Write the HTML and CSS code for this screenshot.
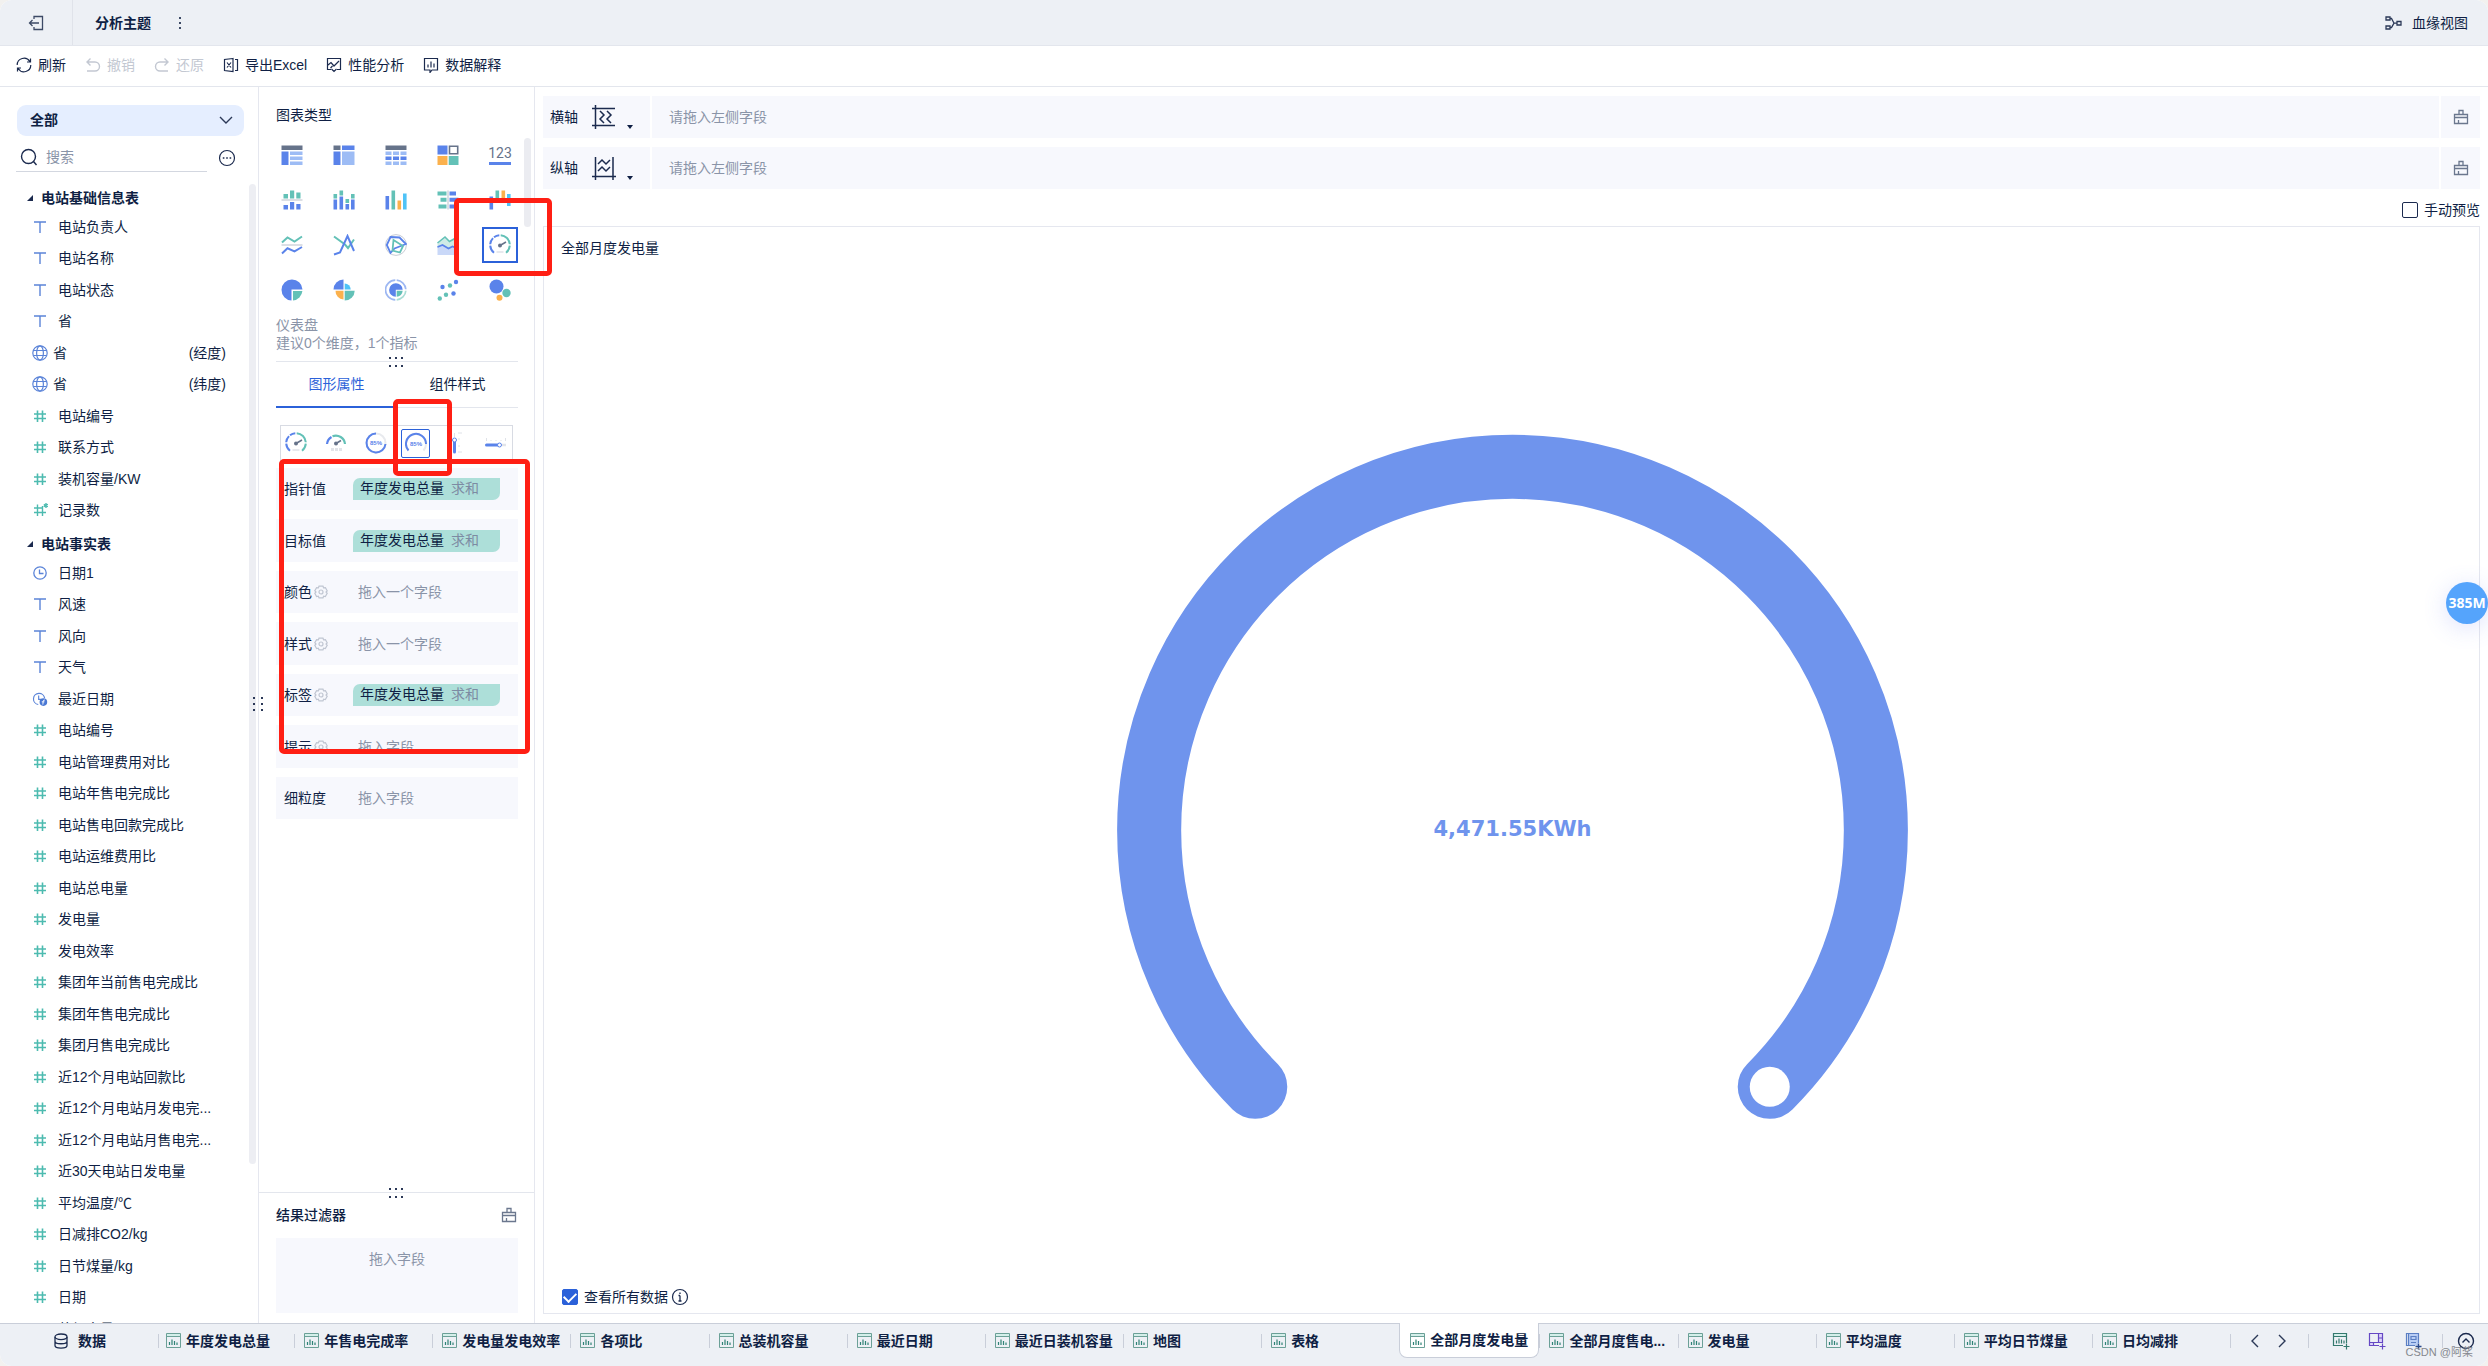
FILE: index.html
```html
<!DOCTYPE html>
<html lang="zh-CN">
<head>
<meta charset="utf-8">
<title>分析主题</title>
<link rel="stylesheet" href="styles.css">
</head>
<body>
<svg class="sprite" aria-hidden="true">
  <symbol id="i-text" viewBox="0 0 16 16"><path d="M2 3h12M8 3v11" fill="none" stroke="#5b84d8" stroke-width="1.4"/></symbol>
  <symbol id="i-num" viewBox="0 0 16 16"><path d="M2 6h12M2 10.500h12M5.500 2.500v11.500M10.500 2.500v11.500" fill="none" stroke="#4dbbb0" stroke-width="1.6"/></symbol>
  <symbol id="i-numstar" viewBox="0 0 16 16"><path d="M2 6h9M2 10.500h12M5.500 2.500v11.500M10.500 4v10M14 1v5M11.800 2.300l4.200 2.400M16 2.300l-4.200 2.400" fill="none" stroke="#4dbbb0" stroke-width="1.400"/></symbol>
  <symbol id="i-geo" viewBox="0 0 16 16"><g fill="none" stroke="#5b84d8" stroke-width="1.200"><circle cx="8" cy="8" r="7.200"/><ellipse cx="8" cy="8" rx="3.400" ry="7.200"/><path d="M1.500 5.500h13M1.500 10.500h13"/></g></symbol>
  <symbol id="i-date" viewBox="0 0 16 16"><g fill="none" stroke="#5b84d8" stroke-width="1.300"><circle cx="8" cy="8" r="6.200"/><path d="M7.500 4.500v4h4"/></g></symbol>
  <symbol id="i-datef" viewBox="0 0 18 16"><g fill="none" stroke="#5b84d8" stroke-width="1.300"><path d="M7 14.200A6.300 6.300 0 1 1 14.200 7M7.500 4v4.500h3"/></g><circle cx="12.800" cy="11.500" r="4.300" fill="#4a78d4"/><path d="M14.500 9.200q-1.700-.4-1.900 1.300l-.4 3.800M11 11.200h3" stroke="#fff" fill="none"/></symbol>
  <symbol id="i-brush" viewBox="0 0 16 16"><path d="M6 5.500V1.500h4v4M1.500 5.500h13v9h-13zM1.500 8.500h13M5.500 11v3.500" fill="none" stroke="#6b778e" stroke-width="1.300"/></symbol>
  <symbol id="i-gear" viewBox="0 0 14 14"><g fill="none" stroke="#c0c6d2" stroke-width="1.200"><path d="M5 1.200h4l.6 1.600 1.800-.2 1.800 3.200L12 7l1.200 1.400-1.900 3.100-1.700-.3L9 12.800H5l-.7-1.600-1.700.3L.8 8.400 2 7 .8 5.700l1.800-3.100 1.800.2z"/><circle cx="7" cy="7" r="2"/></g></symbol>
  <symbol id="i-sheet" viewBox="0 0 15 15"><rect x=".5" y=".5" width="14" height="3" fill="#d4efea"/><path d="M.5.5h14v14H.5zM.5 3.500h14" fill="none" stroke="#6ba097"/><path d="M3.500 12V9M6 12V6.500M8.500 12V8M11 12V9.500" stroke="#2f8376" stroke-width="1.200"/></symbol>
  <symbol id="i-gauge" viewBox="0 0 22 22"><g fill="none" stroke-width="2"><path d="M5 18.700A9.800 9.800 0 0 1 1.200 11.700M1.200 10.300A9.800 9.800 0 0 1 4 4.100M5 3.200A9.800 9.800 0 0 1 10.300 1.200" stroke="#5a83ea"/><path d="M11.700 1.200A9.800 9.800 0 0 1 20.800 10.300M20.800 11.700A9.800 9.800 0 0 1 17 18.700" stroke="#63c1b7"/></g><path d="M11 11.500l6-3.500" stroke="#66738a" stroke-width="1.500"/><circle cx="11" cy="11.500" r="2" fill="#66738a"/><path d="M7.500 18h7" stroke="#dfe2e8" stroke-width="1.500"/></symbol>
</svg>

<div class="app">
  <header class="topbar">
    <button class="topbar-exit" aria-label="退出"><svg width="16" height="16" viewBox="0 0 16 16" fill="none" stroke="#3d4a66" stroke-width="1.300"><path d="M6 4V1.500h8.500v13H6V12M11 8H1.500M4.500 5L1.500 8l3 3"/></svg></button>
    <h1 class="topbar-title">分析主题</h1>
    <button class="topbar-more" aria-label="更多"><svg width="4" height="14" viewBox="0 0 4 14" fill="#3d4a66"><path d="M1 1h2v2H1zM1 6h2v2H1zM1 11h2v2H1z"/></svg></button>
    <a class="lineage" href="#lineage"><svg width="17" height="14" viewBox="0 0 17 14" fill="none" stroke="#2b3857" stroke-width="1.300"><path d="M1 1h4v3H1zM1 10h4v3H1zM12 5.500h4v3.500h-4zM5 2.500h1.500L9 7.200h3M5 11.500h1.500L9 7.200"/></svg>血缘视图</a>
  </header>

  <nav class="toolbar">
    <button class="tool"><svg width="16" height="16" viewBox="0 0 16 16" fill="none" stroke="#1b2a4e" stroke-width="1.200"><path d="M1.200 8A6.800 6.800 0 0 1 13.800 4.500M14.500 1.500v3.500H11M14.800 8A6.800 6.800 0 0 1 2.200 11.500M1.500 14.500V11H5"/></svg>刷新</button>
    <button class="tool" disabled><svg width="16" height="16" viewBox="0 0 16 16" fill="none" stroke="#c3c8d2" stroke-width="1.400"><path d="M5.500 1.500L2 5l3.500 3.500M2 5h8a4.500 4.500 0 0 1 0 9H2"/></svg>撤销</button>
    <button class="tool" disabled><svg width="16" height="16" viewBox="0 0 16 16" fill="none" stroke="#c3c8d2" stroke-width="1.400"><path d="M10.500 1.500L14 5l-3.500 3.500M14 5H6a4.500 4.500 0 0 0 0 9h8"/></svg>还原</button>
    <button class="tool"><svg width="16" height="16" viewBox="0 0 16 16" fill="none" stroke="#1b2a4e" stroke-width="1.200"><path d="M10 1.500L1.500 2.500v11L10 14.500zM12 2.500h2.500v11H12M4 5.500l4 5M8 5.500l-4 5"/></svg>导出Excel</button>
    <button class="tool"><svg width="16" height="16" viewBox="0 0 16 16" fill="none" stroke="#1b2a4e" stroke-width="1.200"><path d="M5 12.500H1.500v-11h13v11H11M2 8l3-2.500 3 3.500 5-5M5.500 12l2.500 2.500L10.500 12M4.500 11l2-2"/></svg>性能分析</button>
    <button class="tool"><svg width="16" height="16" viewBox="0 0 16 16" fill="none" stroke="#1b2a4e" stroke-width="1.200"><path d="M5 13H1.500V1.500h13V13H9l-2 2.500V13zM5 10.500V7.500M8 10.500v-6M11 10.500V6.500"/></svg>数据解释</button>
  </nav>

  <main class="workspace">
    <aside class="fields">
      <label class="scope"><select aria-label="范围"><option>全部</option></select><svg width="14" height="8" viewBox="0 0 14 8" fill="none" stroke="#2b3857" stroke-width="1.400"><path d="M1 1l6 6 6-6"/></svg></label>
      <div class="search">
        <label class="search-box"><svg width="18" height="18" viewBox="0 0 18 18" fill="none" stroke="#1b2a4e" stroke-width="1.400"><circle cx="8.500" cy="8.500" r="7"/><path d="M13.500 13.500l3 3.500"/></svg><input type="text" placeholder="搜索" aria-label="搜索"></label>
        <button class="search-more" aria-label="更多"><svg width="18" height="18" viewBox="0 0 18 18"><circle cx="9" cy="9" r="7.500" fill="none" stroke="#1b2a4e" stroke-width="1.200"/><path d="M4.800 8.200h1.600v1.600H4.800zM8.200 8.200h1.600v1.600H8.200zM11.600 8.200h1.600v1.600h-1.600z" fill="#1b2a4e"/></svg></button>
      </div>
      <div class="tree">
        <h2 class="tree-group">电站基础信息表</h2>
        <ul class="tree-list">
          <li><svg><use href="#i-text"/></svg>电站负责人</li>
          <li><svg><use href="#i-text"/></svg>电站名称</li>
          <li><svg><use href="#i-text"/></svg>电站状态</li>
          <li><svg><use href="#i-text"/></svg>省</li>
          <li class="geo"><svg><use href="#i-geo"/></svg>省<span>(经度)</span></li>
          <li class="geo"><svg><use href="#i-geo"/></svg>省<span>(纬度)</span></li>
          <li><svg><use href="#i-num"/></svg>电站编号</li>
          <li><svg><use href="#i-num"/></svg>联系方式</li>
          <li><svg><use href="#i-num"/></svg>装机容量/KW</li>
          <li><svg><use href="#i-numstar"/></svg>记录数</li>
        </ul>
        <h2 class="tree-group">电站事实表</h2>
        <ul class="tree-list">
          <li><svg><use href="#i-date"/></svg>日期1</li>
          <li><svg><use href="#i-text"/></svg>风速</li>
          <li><svg><use href="#i-text"/></svg>风向</li>
          <li><svg><use href="#i-text"/></svg>天气</li>
          <li><svg><use href="#i-datef"/></svg>最近日期</li>
          <li><svg><use href="#i-num"/></svg>电站编号</li>
          <li><svg><use href="#i-num"/></svg>电站管理费用对比</li>
          <li><svg><use href="#i-num"/></svg>电站年售电完成比</li>
          <li><svg><use href="#i-num"/></svg>电站售电回款完成比</li>
          <li><svg><use href="#i-num"/></svg>电站运维费用比</li>
          <li><svg><use href="#i-num"/></svg>电站总电量</li>
          <li><svg><use href="#i-num"/></svg>发电量</li>
          <li><svg><use href="#i-num"/></svg>发电效率</li>
          <li><svg><use href="#i-num"/></svg>集团年当前售电完成比</li>
          <li><svg><use href="#i-num"/></svg>集团年售电完成比</li>
          <li><svg><use href="#i-num"/></svg>集团月售电完成比</li>
          <li><svg><use href="#i-num"/></svg>近12个月电站回款比</li>
          <li><svg><use href="#i-num"/></svg>近12个月电站月发电完...</li>
          <li><svg><use href="#i-num"/></svg>近12个月电站月售电完...</li>
          <li><svg><use href="#i-num"/></svg>近30天电站日发电量</li>
          <li><svg><use href="#i-num"/></svg>平均温度/℃</li>
          <li><svg><use href="#i-num"/></svg>日减排CO2/kg</li>
          <li><svg><use href="#i-num"/></svg>日节煤量/kg</li>
          <li><svg><use href="#i-num"/></svg>日期</li>
          <li><svg><use href="#i-num"/></svg>装机容量</li>
        </ul>
        <div class="tree-scroll"></div>
      </div>
      <div class="grip grip-side"></div>
    </aside>

    <section class="config">
      <div class="types">
        <h2 class="config-title">图表类型</h2>
        <div class="type-grid">
          <button aria-label="分组表"><svg viewBox="0 0 22 22"><path d="M.5 1.500h21V6H.5z" fill="#66738a"/><path d="M.5 7.500h7V21h-7z" fill="#5a83ea"/><path d="M9 7.500h12.500v3.500H9zM9 12.500h12.500V16H9zM9 17.500h12.500V21H9z" fill="#9dbcf5"/></svg></button>
          <button aria-label="交叉表"><svg viewBox="0 0 22 22"><path d="M.5 1.500h7V6h-7z" fill="#66738a"/><path d="M.5 7.500h7V21h-7zM9 1.500h12.500V6H9z" fill="#5a83ea"/><path d="M9 7.500h12.500V21H9z" fill="#9dbcf5"/></svg></button>
          <button aria-label="明细表"><svg viewBox="0 0 22 22"><path d="M.5 1.500h21V6H.5z" fill="#66738a"/><path d="M.5 7.500h6v3.500h-6zM8 7.500h6v3.500H8zM15.500 7.500h6v3.500h-6zM.5 17.500h6V21h-6zM8 17.500h6V21H8zM15.500 17.500h6V21h-6z" fill="#9dbcf5"/><path d="M.5 12.500h6V16h-6zM8 12.500h6V16H8zM15.500 12.500h6V16h-6z" fill="#5a83ea"/></svg></button>
          <button aria-label="颜色表格"><svg viewBox="0 0 22 22"><path d="M.5 1.500h10v9H.5z" fill="#5a83ea"/><path d="M12.500 2.300h8.200v7.400h-8.200z" fill="none" stroke="#66738a" stroke-width="1.600"/><path d="M.5 12h10v9H.5z" fill="#fbb14d"/><path d="M11.700 12h9.800v9h-9.800z" fill="#63c1b7"/></svg></button>
          <button aria-label="指标卡" class="kpi"><span>123</span></button>

          <button aria-label="对比柱形图"><svg viewBox="0 0 22 22"><path d="M2.500 5h4.500v4.500H2.500zM9 1.500h4.200v8H9zM15.300 3.500h4.200v6h-4.200z" fill="#63c1b7"/><path d="M.5 11h21" stroke="#b9bfca"/><path d="M2.500 16h4.500v4.500H2.500zM9 13h4.200v7.500H9zM15.300 15h4.200v5.500h-4.200z" fill="#5a83ea"/></svg></button>
          <button aria-label="堆积柱形图"><svg viewBox="0 0 22 22"><path d="M.5 5h3.600v4.500H.5zM6.500 1.500h3.600v5H6.500zM12.500 10h3.600v4h-3.600zM18 5h3.600v4.500H18z" fill="#63c1b7"/><path d="M.5 10.500h3.600v10H.5zM6.500 7.500h3.600v13H6.500zM12.500 15h3.600v5.500h-3.600zM18 10.500h3.600v10H18z" fill="#5a83ea"/></svg></button>
          <button aria-label="分组柱形图"><svg viewBox="0 0 22 22"><path d="M.5 7h3.600v13.500H.5z" fill="#5a83ea"/><path d="M6.500 1.500h3.600v19H6.500z" fill="#63c1b7"/><path d="M12.500 11.500h3.600v9h-3.600z" fill="#fbb14d"/><path d="M18 4.500h3.600v16H18z" fill="#4fc3f7"/></svg></button>
          <button aria-label="对比条形图"><svg viewBox="0 0 22 22"><path d="M.5 2.500h9v4h-9zM3.500 8.800h6v4h-6zM1.500 15.500h8v4h-8z" fill="#63c1b7"/><path d="M11 1.500v19" stroke="#b9bfca"/><path d="M12.500 2.500h6.500v4h-6.500zM12.500 8.800h9v4h-9zM12.500 15.500h7v4h-7z" fill="#5a83ea"/></svg></button>
          <button aria-label="瀑布图"><svg viewBox="0 0 22 22"><path d="M.5 7.500h3.600v13H.5z" fill="#5a83ea"/><path d="M6.500 1.500h3.600v9H6.500z" fill="#63c1b7"/><path d="M12.500 1.500h3.600v8h-3.600z" fill="#fbb14d"/><path d="M18 5h3.600v12H18z" fill="#4fc3f7"/></svg></button>

          <button aria-label="折线图"><svg viewBox="0 0 22 22" fill="none" stroke-width="2"><path d="M1 8.500l5.500-5 7 4L21 2.500" stroke="#63c1b7"/><path d="M.5 11h21" stroke="#b9bfca" stroke-width="1"/><path d="M1 19.500l5.500-5.200 7 3L21 13" stroke="#5a83ea"/></svg></button>
          <button aria-label="组合折线图"><svg viewBox="0 0 22 22" fill="none" stroke-width="2"><path d="M1 2.500l11 8 3 3.500L21 5.500" stroke="#63c1b7"/><path d="M1 20.500l6-2L14.500 2 21 17" stroke="#5a83ea"/></svg></button>
          <button aria-label="雷达图"><svg viewBox="0 0 22 22" fill="none" stroke-width="1.800"><circle cx="11" cy="11" r="10.400" stroke="#c8ccd5" stroke-width="1"/><path d="M5.500 3l9 .5 6.500 6.500-11.500 4.500-4 4.500L1.800 11z" stroke="#5a83ea"/><path d="M8.500 6l9.500 6-3 6.500-7.500-2z" stroke="#63c1b7"/></svg></button>
          <button aria-label="面积图"><svg viewBox="0 0 22 22"><path d="M.5 9L8 3l4.500 4.500L17 5l4.500 3v6H.5z" fill="#cfebe6"/><path d="M.5 13l5-2 6 3.500 4-2 6 2.500v6H.5z" fill="#c9d8f8"/><path d="M.5 9L8 3l4.500 4.500L17 5l4.500 3" fill="none" stroke="#63c1b7" stroke-width="1.600"/><path d="M.5 13l5-2 6 3.500 4-2 6 2.500" fill="none" stroke="#5a83ea" stroke-width="1.600"/></svg></button>
          <button aria-label="仪表盘" class="is-selected"><svg><use href="#i-gauge"/></svg></button>

          <button aria-label="饼图"><svg viewBox="0 0 22 22"><path d="M10.500 10.500H21.500A10.500 10.500 0 1 0 10.500 21.500z" fill="#5a83ea"/><path d="M12 12h9.400A10.500 10.500 0 0 1 12 21.400z" fill="#63c1b7"/></svg></button>
          <button aria-label="玫瑰图"><svg viewBox="0 0 22 22"><path d="M10.500 10.500V.5A10 10 0 0 0 .5 10.500z" fill="#5a83ea"/><path d="M11.700 10.500V4.500a6 6 0 0 1 6 6z" fill="#4fc3f7"/><path d="M10.500 11.700V20.500A8.500 8.500 0 0 1 2.500 11.700z" fill="#fbb14d"/><path d="M11.700 11.700h10A10 10 0 0 1 11.700 21.500z" fill="#63c1b7"/></svg></button>
          <button aria-label="多层饼图"><svg viewBox="0 0 22 22"><g fill="none" stroke-width="1.700"><path d="M10.300 1.200A9.800 9.800 0 0 0 10.300 20.800M11.700 1.200A9.800 9.800 0 0 1 20.800 10.300" stroke="#9db7f2"/><path d="M20.800 11.700A9.800 9.800 0 0 1 11.700 20.800" stroke="#a9ddd5"/></g><path d="M10.800 10.800H17.700A6.800 6.800 0 1 0 10.800 17.800z" fill="#5a83ea"/><path d="M11.700 11.700h6A6.500 6.500 0 0 1 11.700 17.800z" fill="#63c1b7"/></svg></button>
          <button aria-label="散点图"><svg viewBox="0 0 22 22"><g fill="#5a83ea"><circle cx="19" cy="3" r="2.200"/><circle cx="5.500" cy="8" r="2.200"/><circle cx="16.500" cy="14.500" r="2.200"/></g><g fill="#63c1b7"><circle cx="13" cy="6.500" r="2.200"/><circle cx="9" cy="15.800" r="2.200"/><circle cx="2.800" cy="19.500" r="2.200"/></g></svg></button>
          <button aria-label="气泡图"><svg viewBox="0 0 22 22"><circle cx="7.500" cy="7.500" r="7" fill="#5a83ea"/><circle cx="17.500" cy="14" r="4.200" fill="#63c1b7"/><circle cx="10.500" cy="18.800" r="3" fill="#fbb14d"/></svg></button>
        </div>
        <div class="type-scroll"></div>
        <p class="type-hint">仪表盘<br>建议0个维度，1个指标</p>
        <div class="grip grip-row"></div>
      </div>

      <div class="attr-tabs" role="tablist">
        <button role="tab" class="is-active">图形属性</button>
        <button role="tab">组件样式</button>
      </div>

      <div class="gauge-styles">
        <button aria-label="多指针仪表盘"><svg><use href="#i-gauge"/></svg></button>
        <button aria-label="半圆指针仪表盘"><svg viewBox="0 0 22 22"><g fill="none" stroke-width="2.200"><path d="M2 12a9.200 9.200 0 0 1 4.500-7" stroke="#5a83ea"/><path d="M7.500 4.200A9.200 9.200 0 0 1 20 12" stroke="#63c1b7"/></g><path d="M11 11.500l5-3" stroke="#66738a" stroke-width="1.500"/><circle cx="11" cy="11.500" r="2" fill="#66738a"/><path d="M6 16h3v3H6zM10 16h3v3h-3zM14 16h3v3h-3z" fill="#e2e4e9"/></svg></button>
        <button aria-label="百分比圆环"><svg viewBox="0 0 22 22"><circle cx="11" cy="11" r="9.500" fill="none" stroke="#e8eaee" stroke-width="2"/><path d="M11 1.500A9.500 9.500 0 1 0 20.500 12" fill="none" stroke="#5a83ea" stroke-width="2"/><text x="11" y="13" class="pct">85%</text></svg></button>
        <button aria-label="百分比刻度槽" class="is-selected"><svg viewBox="0 0 22 22"><path d="M3.500 18.500A10 10 0 1 1 18.500 18.500" fill="none" stroke="#e8eaee" stroke-width="2"/><path d="M3.500 18.500A10 10 0 1 1 21 12" fill="none" stroke="#5a83ea" stroke-width="2"/><text x="11" y="14" class="pct">85%</text></svg></button>
        <button aria-label="垂直试管"><svg viewBox="0 0 22 22"><path d="M9.500 10v10" stroke="#5a83ea" stroke-width="3" stroke-linecap="round"/><circle cx="9.500" cy="8" r="2" fill="#fff" stroke="#5a83ea"/><path d="M9.500 1v4M13 1h4M13 7h2M13 14h2M13 20h4" stroke="#dfe2e8"/></svg></button>
        <button aria-label="水平试管"><svg viewBox="0 0 22 22"><path d="M17 13h4" stroke="#e2e4e9" stroke-width="2.500"/><path d="M1.500 13h11" stroke="#5a83ea" stroke-width="3" stroke-linecap="round"/><circle cx="14.500" cy="13" r="2" fill="#fff" stroke="#5a83ea"/><path d="M1.500 6v3M6 8v1M11 8v1M16 8v1M20.500 6v3" stroke="#dfe2e8"/></svg></button>
      </div>

      <dl class="slots">
        <div><dt>指针值</dt><dd class="chip">年度发电总量<span>求和</span></dd></div>
        <div><dt>目标值</dt><dd class="chip">年度发电总量<span>求和</span></dd></div>
        <div><dt>颜色<svg><use href="#i-gear"/></svg></dt><dd>拖入一个字段</dd></div>
        <div><dt>样式<svg><use href="#i-gear"/></svg></dt><dd>拖入一个字段</dd></div>
        <div><dt>标签<svg><use href="#i-gear"/></svg></dt><dd class="chip">年度发电总量<span>求和</span></dd></div>
        <div><dt>提示<svg><use href="#i-gear"/></svg></dt><dd>拖入字段</dd></div>
        <div><dt>细粒度</dt><dd>拖入字段</dd></div>
      </dl>

      <div class="filter">
        <div class="grip grip-row"></div>
        <div class="filter-head"><h2>结果过滤器</h2><button aria-label="清空"><svg><use href="#i-brush"/></svg></button></div>
        <div class="filter-drop">拖入字段</div>
      </div>

      <div class="mark mark-type"></div>
      <div class="mark mark-style"></div>
      <div class="mark mark-slots"></div>
    </section>

    <section class="stage">
      <div class="axis">
        <div class="axis-name">横轴<button aria-label="横轴设置"><svg width="24" height="24" viewBox="0 0 24 24" fill="none" stroke="#1b2a4e" stroke-width="1.500"><path d="M3.500 0v24M0 3.500h23M0 20.500h23M8 6l4 4-4 4 4 4M15 6l4 4-4 4 4 4"/></svg><i></i></button></div>
        <div class="axis-drop">请拖入左侧字段</div>
        <button class="axis-clear" aria-label="清空"><svg><use href="#i-brush"/></svg></button>
      </div>
      <div class="axis">
        <div class="axis-name">纵轴<button aria-label="纵轴设置"><svg width="24" height="24" viewBox="0 0 24 24" fill="none" stroke="#1b2a4e" stroke-width="1.500"><path d="M3.500 1v23M21 1v23M0 20.500h24M6 8l4-4 4 4 4-4M6 15l4-4 4 4 4-4"/></svg><i></i></button></div>
        <div class="axis-drop">请拖入左侧字段</div>
        <button class="axis-clear" aria-label="清空"><svg><use href="#i-brush"/></svg></button>
      </div>
      <div class="preview"><label class="check"><input type="checkbox">手动预览</label></div>
      <div class="canvas">
        <h2 class="canvas-title">全部月度发电量</h2>
        <svg class="gauge" viewBox="-506 -560 1010 1011">
          <path d="M-257 257A363 363 0 1 1 257 257" fill="none" stroke="#6f94ed" stroke-width="64" stroke-linecap="round"/>
          <circle cx="257" cy="257" r="20" fill="#fff"/>
          <text x="0" y="6" class="gauge-value">4,471.55KWh</text>
        </svg>
        <div class="canvas-foot"><label class="check"><input type="checkbox" checked>查看所有数据</label><svg width="18" height="18" viewBox="0 0 18 18"><circle cx="9" cy="9" r="7.500" fill="none" stroke="#1b2a4e" stroke-width="1.200"/><path d="M9 7.500v5.500M9 4.500v1.500M7.500 7.500H9M7.500 13h3" stroke="#1b2a4e" stroke-width="1.300"/></svg></div>
      </div>
    </section>
  </main>

  <footer class="sheets">
    <button class="data-tab"><svg width="14" height="16" viewBox="0 0 14 16" fill="none" stroke="#1b2a4e" stroke-width="1.300"><ellipse cx="7" cy="3.800" rx="6" ry="2.800"/><path d="M1 4v8.500c0 3.500 12 3.500 12 0V4M1 8.200c0 3.400 12 3.400 12 0"/></svg>数据</button>
    <div class="sheet-list">
      <button><svg><use href="#i-sheet"/></svg>年度发电总量</button>
      <button><svg><use href="#i-sheet"/></svg>年售电完成率</button>
      <button><svg><use href="#i-sheet"/></svg>发电量发电效率</button>
      <button><svg><use href="#i-sheet"/></svg>各项比</button>
      <button><svg><use href="#i-sheet"/></svg>总装机容量</button>
      <button><svg><use href="#i-sheet"/></svg>最近日期</button>
      <button><svg><use href="#i-sheet"/></svg>最近日装机容量</button>
      <button><svg><use href="#i-sheet"/></svg>地图</button>
      <button><svg><use href="#i-sheet"/></svg>表格</button>
      <button class="is-active"><svg><use href="#i-sheet"/></svg>全部月度发电量</button>
      <button><svg><use href="#i-sheet"/></svg>全部月度售电...</button>
      <button><svg><use href="#i-sheet"/></svg>发电量</button>
      <button><svg><use href="#i-sheet"/></svg>平均温度</button>
      <button><svg><use href="#i-sheet"/></svg>平均日节煤量</button>
      <button><svg><use href="#i-sheet"/></svg>日均减排</button>
    </div>
    <div class="pager">
      <button aria-label="上一页"><svg width="8" height="14" viewBox="0 0 8 14"><path d="M7 1L1 7l6 6" fill="none" stroke="#2b3857" stroke-width="1.400"/></svg></button>
      <button aria-label="下一页"><svg width="8" height="14" viewBox="0 0 8 14"><path d="M1 1l6 6-6 6" fill="none" stroke="#2b3857" stroke-width="1.400"/></svg></button>
    </div>
    <div class="adders">
      <button aria-label="新建组件"><svg width="18" height="18" viewBox="0 0 18 18"><path d="M1.500 1.500h13V5h-13z" fill="#d4efea"/><path d="M11 13.500H1.500v-12h13V11M1.500 4.500h13M4.500 11.500v-3M7 11.500v-5M9.500 11.500v-4M12 11.500v-3M14.500 11.500v6M11.500 14.500h6" fill="none" stroke="#34796e" stroke-width="1.200"/></svg></button>
      <button aria-label="新建仪表板"><svg width="18" height="18" viewBox="0 0 18 18"><path d="M10.500 1.500h4v9h-9v3h-4v-3h9z" fill="#ddd3fb"/><path d="M11 13.500H1.500v-12h13V11M10.500 1.500v9M1.500 10.500h13M5.500 10.500v3M10.500 6h4M14.500 11.500v6M11.500 14.500h6" fill="none" stroke="#6548c4" stroke-width="1.200"/></svg></button>
      <button aria-label="新建文档"><svg width="18" height="18" viewBox="0 0 18 18"><path d="M4.500 1.500h10v12h-10z" fill="#b8cdf5"/><path d="M11 13.500H2.500v-12h12V11M4.500 1.500v12M7 4.500h5v3H7zM7 10.500h5" fill="none" stroke="#5b7fc4" stroke-width="1.200"/><path d="M14.500 11.500v6M11.500 14.500h6" stroke="#2b4a8c" stroke-width="1.400"/></svg></button>
    </div>
    <button class="collapse" aria-label="收起"><svg width="18" height="18" viewBox="0 0 18 18" fill="none" stroke="#1b2a4e" stroke-width="1.400"><circle cx="9" cy="9" r="7.500"/><path d="M5.500 10.500L9 7l3.500 3.500"/></svg></button>
  </footer>

  <button class="memory">385M</button>
  <span class="watermark">CSDN @阿桨</span>
</div>
</body>
</html>
```

FILE: styles.css
```css
* { box-sizing: border-box; }

body {
  margin: 0;
  background: #f2f1ef;
  color: #0f1f44;
  font: 14px/20px "Liberation Sans", "Noto Sans CJK SC", sans-serif;
}

button, input, select {
  margin: 0;
  padding: 0;
  border: 0;
  background: none;
  color: inherit;
  font: inherit;
}

button { white-space: nowrap; }
h1, h2, p, ul, dl, dd { margin: 0; padding: 0; }
h1, h2 { font-size: 14px; font-weight: 400; }
svg { display: block; flex: none; }
.sprite { position: absolute; width: 0; height: 0; }

.app {
  position: relative;
  display: flex;
  flex-direction: column;
  height: 100vh;
  overflow: hidden;
  border-radius: 12px;
  background: #fff;
}

/* Top bar */
.topbar {
  display: flex;
  align-items: center;
  flex: none;
  height: 46px;
  border-bottom: 1px solid #e3e6ed;
  background: #edf0f5;
}
.topbar-exit {
  display: flex;
  align-items: center;
  justify-content: center;
  width: 73px;
  height: 100%;
  border-right: 1px solid #e0e3ea;
}
.topbar-title { margin-left: 22px; font-weight: 700; }
.topbar-more { margin-left: 27px; }
.lineage {
  display: flex;
  align-items: center;
  gap: 10px;
  margin-left: auto;
  padding-right: 20px;
  color: inherit;
  text-decoration: none;
}

.toolbar {
  display: flex;
  align-items: center;
  flex: none;
  gap: 19px;
  height: 41px;
  padding: 0 16px 2px;
  border-bottom: 1px solid #e3e6ed;
}
.tool { display: flex; align-items: center; gap: 6px; }
.tool:disabled { color: #c3c8d2; }

.workspace {
  display: grid;
  grid-template-columns: 259px 276px 1fr;
  flex: 1;
  min-height: 0;
}

/* Field tree */
.fields {
  position: relative;
  display: flex;
  flex-direction: column;
  min-height: 0;
  padding-top: 18px;
  border-right: 1px solid #e5e7ef;
}
.scope {
  display: flex;
  align-items: center;
  height: 31px;
  margin: 0 14px 0 17px;
  padding: 0 11px 2px 13px;
  border-radius: 9px;
  background: #e5eeff;
}
.scope select { flex: 1; appearance: none; font-weight: 700; }
.search {
  display: flex;
  align-items: center;
  justify-content: space-between;
  height: 36px;
  margin: 0 22px 11px 16px;
}
.search-box {
  display: flex;
  align-items: center;
  gap: 8px;
  width: 191px;
  height: 36px;
  padding: 7px 0 0 4px;
  border-bottom: 1px solid #d3d7e0;
}
.search-box input { width: 140px; outline: 0; }
.search-box input::placeholder { color: #8a94a8; opacity: 1; }
.search-more { padding-top: 7px; }
.tree { position: relative; flex: 1; min-height: 0; overflow: hidden; }
.tree-group {
  display: flex;
  align-items: center;
  gap: 8px;
  height: 28px;
  padding: 2px 0 0 27px;
  font-weight: 700;
}
.tree-group::before {
  content: "";
  border-left: 6px solid transparent;
  border-bottom: 6px solid #1b2a4e;
}
.tree-list { list-style: none; }
.tree-list + .tree-group { margin-top: 3px; }
.tree-list li {
  display: flex;
  align-items: center;
  gap: 10px;
  height: 31px;
  padding: 0 32px 0 32px;
  white-space: nowrap;
}
.tree-list li:nth-child(even) { height: 32px; }
.tree-list svg { width: 16px; height: 16px; }
.tree-list .geo { gap: 5px; }
.geo span { margin-left: auto; }
.tree-scroll {
  position: absolute;
  top: 1px;
  right: 2px;
  width: 7px;
  height: 86%;
  border-radius: 4px;
  background: #edeef3;
}

/* Drag handles made of dots */
.grip {
  position: absolute;
  background-image: radial-gradient(circle at 1px 1px, #2b3857 1px, transparent 1px);
}
.grip-side { top: 610px; right: -5px; width: 10px; height: 15px; background-size: 8px 6px; }
.grip-row { left: 130px; width: 15px; height: 10px; background-size: 6px 8px; }

/* Chart configuration */
.config {
  position: relative;
  display: flex;
  flex-direction: column;
  min-height: 0;
  border-right: 1px solid #e5e7ef;
}
.types {
  position: relative;
  height: 275px;
  padding: 18px 0 0 17px;
}
.types::after {
  content: "";
  position: absolute;
  right: 16px;
  bottom: 0;
  left: 17px;
  height: 1px;
  background: #e3e6ed;
}
.type-grid {
  display: grid;
  grid-template-columns: repeat(5, 36px);
  grid-auto-rows: 36px;
  gap: 9px 16px;
  margin-top: 12px;
  margin-left: -2px;
}
.type-grid button { display: flex; align-items: center; justify-content: center; }
.type-grid svg, .gauge-styles svg { width: 22px; height: 22px; }
.type-grid .is-selected { border: 2px solid #2b61d9; background: #fff; }
.kpi span {
  display: flex;
  justify-content: center;
  width: 22px;
  border-bottom: 3px solid #5a83ea;
  color: #66738a;
  font: 14px/17px Roboto, sans-serif;
}
.type-scroll {
  position: absolute;
  top: 51px;
  right: 3px;
  width: 7px;
  height: 89px;
  border-radius: 4px;
  background: #ebecf1;
}
.type-hint { margin-top: 8px; color: #8a94a8; line-height: 18px; }
.types .grip { bottom: -5px; }

.attr-tabs {
  display: flex;
  height: 46px;
  margin: 0 16px 0 17px;
  border-bottom: 1px solid #e3e6ed;
}
.attr-tabs button { flex: 1; height: 46px; border-bottom: 2px solid transparent; }
.attr-tabs .is-active { border-color: #2b61d9; color: #2b61d9; }

.gauge-styles {
  display: flex;
  justify-content: space-between;
  align-items: center;
  height: 36px;
  margin: 17px 21px 7px;
  padding: 0 2px 0 0;
  border: 1px solid #d8dbe3;
}
.gauge-styles button {
  display: flex;
  align-items: center;
  justify-content: center;
  width: 29px;
  height: 29px;
  border: 1px solid transparent;
  border-radius: 2px;
}
.gauge-styles .is-selected { border-color: #2b61d9; }
.pct { fill: #5a83ea; font: 700 6px "Liberation Sans", sans-serif; text-anchor: middle; }

.slots { display: flex; flex-direction: column; gap: 9px; margin: 0 16px 0 17px; }
.slots > div {
  display: flex;
  align-items: center;
  height: 42px;
  padding-left: 8px;
  background: #f7f8fd;
}
.slots > div:nth-child(even) { height: 43px; }
.slots dt { display: flex; align-items: center; gap: 2px; width: 69px; }
.slots dt svg { width: 14px; height: 14px; }
.slots dd { padding-left: 5px; color: #8a94a8; }
.slots .chip {
  width: 147px;
  height: 22px;
  padding-left: 7px;
  border-radius: 7px 0 7px 0;
  background: #addfd9;
  color: #0f1f44;
  line-height: 21px;
}
.chip span { margin-left: 7px; color: #7d8ba3; }

.filter {
  position: relative;
  height: 131px;
  margin-top: auto;
  padding: 12px 16px 0 17px;
  border-top: 1px solid #e3e6ed;
}
.filter .grip { top: -5px; }
.filter-head { display: flex; align-items: center; justify-content: space-between; padding-right: 1px; }
.filter-head h2 { font-weight: 500; }
.filter-head svg, .axis-clear svg { width: 16px; height: 16px; }
.filter-drop {
  height: 75px;
  margin-top: 13px;
  padding-top: 11px;
  background: #f7f8fd;
  color: #8a94a8;
  text-align: center;
}

/* Red annotation frames laid over the panel */
.mark { position: absolute; z-index: 2; border: 5px solid #ff1f14; border-radius: 5px; }
.mark-type { top: 111px; left: 195px; width: 98px; height: 78px; }
.mark-style { top: 312px; left: 134px; width: 59px; height: 77px; }
.mark-slots { top: 372px; left: 20px; width: 251px; height: 295px; }

/* Stage */
.stage {
  display: flex;
  flex-direction: column;
  min-width: 0;
  min-height: 0;
  padding: 9px 8px 9px;
}
.axis {
  display: flex;
  gap: 2px;
  flex: none;
  height: 42px;
  margin-bottom: 9px;
}
.axis > * { display: flex; align-items: center; background: #f7f8fd; }
.axis-name { width: 107px; padding-left: 7px; }
.axis-name button { display: flex; align-items: flex-end; gap: 11px; margin-left: 14px; }
.axis-name i { border: 3px solid transparent; border-top: 4px solid #0f1f44; border-bottom: 0; }
.axis-drop { flex: 1; padding-left: 17px; color: #8a94a8; }
.axis-clear { justify-content: center; width: 39px; }
.preview { display: flex; justify-content: flex-end; height: 28px; padding-bottom: 4px; }
.check { display: flex; align-items: center; gap: 6px; }
.check input {
  width: 16px;
  height: 16px;
  border: 1px solid #1b2a4e;
  border-radius: 2px;
  appearance: none;
}
.check input:checked {
  border-color: #2b61d9;
  background: #2b61d9;
  display: grid;
  place-items: center;
}
.check input:checked::before {
  content: "";
  width: 10px;
  height: 6px;
  border: solid #fff;
  border-width: 0 0 2px 2px;
  transform: translateY(-1px) rotate(-45deg);
}
.canvas {
  display: flex;
  flex-direction: column;
  flex: 1;
  min-height: 0;
  border: 1px solid #e5e7ef;
}
.canvas-title { height: 42px; padding: 11px 17px; }
.gauge { flex: 1; width: 100%; min-height: 0; }
.gauge-value {
  fill: #6f94ed;
  font: 700 21px "DejaVu Sans", sans-serif;
  text-anchor: middle;
}
.canvas-foot { display: flex; align-items: center; gap: 3px; height: 32px; padding-left: 18px; }

/* Sheet tabs */
.sheets {
  position: relative;
  display: flex;
  flex: none;
  height: 43px;
  padding-right: 12px;
  border-top: 1px solid #c9ced9;
  background: #edf0f5;
}
.data-tab {
  display: flex;
  align-items: center;
  gap: 10px;
  width: 156px;
  height: 33px;
  padding-left: 54px;
  font-weight: 700;
}
.sheet-list { display: flex; flex: 1; min-width: 0; }
.sheet-list button {
  position: relative;
  display: flex;
  align-items: center;
  gap: 5px;
  flex: 1 1 0;
  min-width: 0;
  height: 33px;
  padding-left: 10px;
  font-weight: 700;
}
.sheet-list svg { width: 15px; height: 15px; }
.sheet-list button::before, .adders::before, .pager::before, .collapse::before {
  content: "";
  position: absolute;
  top: 10px;
  left: 0;
  width: 1px;
  height: 14px;
  background: #c9ced9;
}
.sheet-list button:first-child::before { left: 2px; }
.sheet-list .is-active {
  margin-top: -1px;
  height: 35px;
  border: 1px solid #c9ced9;
  border-top: 0;
  border-radius: 0 0 8px 8px;
  background: #fff;
}
.sheet-list .is-active::before { content: none; }
.pager, .adders, .collapse {
  position: relative;
  display: flex;
  align-items: center;
  height: 34px;
}
.pager { gap: 19px; width: 78px; padding-left: 21px; }
.adders { gap: 18px; width: 134px; padding-left: 24px; }
.collapse { width: 34px; padding-left: 15px; }

.memory {
  position: absolute;
  z-index: 2;
  top: 582px;
  right: 0;
  width: 42px;
  height: 42px;
  border-radius: 50%;
  background: #55a4fc;
  box-shadow: 0 4px 24px rgba(90, 110, 240, .2);
  color: #fff;
  font: 700 14px/42px "Open Sans", sans-serif;
  text-align: center;
}
.watermark {
  position: absolute;
  right: 15px;
  bottom: 5px;
  color: #85888f;
  font-size: 11px;
  line-height: 18px;
}
```
